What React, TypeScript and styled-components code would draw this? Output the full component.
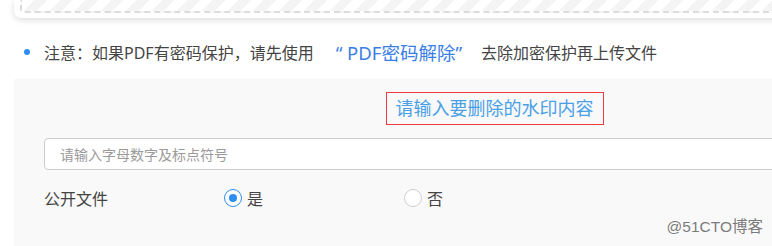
import React, { useState } from "react";
import styled, { createGlobalStyle } from "styled-components";

const Global = createGlobalStyle`
  html, body { margin: 0; padding: 0; background: #fff; overflow: hidden; }
  body { font-family: "Noto Sans", "Noto Sans CJK SC", sans-serif; }
`;

const Viewport = styled.div`
  position: relative;
  width: 772px;
  height: 246px;
  overflow: hidden;
  background: #fff;
`;

const Page = styled.div`
  width: 961px;
  padding-left: 14px;
  display: flex;
  flex-direction: column;
`;

const UploadCard = styled.div`
  height: 18px;
  box-sizing: border-box;
  padding: 0 6px 5px 6px;
  background: #fff;
  border-radius: 0 0 7px 7px;
  box-shadow: 0 2px 6px rgba(0, 0, 0, 0.14);
  display: flex;
`;

const DropZone = styled.div`
  flex: 1;
  border: 2px dashed #dcdcdc;
  border-top: none;
  border-radius: 0 0 3px 3px;
  background: repeating-linear-gradient(
    135deg,
    #ffffff 0 9px,
    #f4f4f4 9px 18px
  );
`;

const Notice = styled.div`
  margin-top: 22px;
  height: 24px;
  display: flex;
  align-items: center;
  padding-left: 10px;
  font-size: 16px;
  color: #444;
  white-space: nowrap;
`;

const Bullet = styled.span`
  width: 6px;
  height: 6px;
  border-radius: 50%;
  background: #2e8df0;
  margin-right: 14px;
  flex: none;
`;

const Link = styled.span`
  color: #3a7ee6;
  font-size: 18.5px;
  margin: 0 19px 0 22px;
`;

const Panel = styled.div`
  margin-top: 15px;
  background: #f9f9f9;
  padding: 13px 30px 40px 30px;
  display: flex;
  flex-direction: column;
`;

const TitleRow = styled.div`
  display: flex;
  justify-content: center;
`;

const TitleBox = styled.div`
  border: 1px solid #ee3b3b;
  padding: 0 9px;
  height: 31px;
  line-height: 31px;
  font-size: 18px;
  color: #4aa0e6;
`;

const TextInput = styled.input`
  margin-top: 13px;
  height: 32px;
  box-sizing: border-box;
  border: 1px solid #cccccc;
  border-radius: 4px;
  background: #fff;
  padding: 0 15px;
  font-family: "Noto Sans", "Noto Sans CJK SC", sans-serif;
  font-size: 14px;
  color: #333;
  outline: none;
  &::placeholder { color: #9a9a9a; }
`;

const OptionRow = styled.div`
  margin-top: 12px;
  height: 32px;
  display: grid;
  grid-template-columns: 180px 180px 180px;
  align-items: center;
  font-size: 16px;
  color: #444;
`;

const Label = styled.span``;

const RadioOption = styled.label`
  display: flex;
  align-items: center;
  gap: 5px;
  cursor: pointer;
`;

const RadioCircle = styled.span<{ $checked: boolean }>`
  width: 16px;
  height: 16px;
  border-radius: 50%;
  border: 1px solid ${(p) => (p.$checked ? "#2e8df0" : "#cfcfcf")};
  background: #fff;
  display: flex;
  align-items: center;
  justify-content: center;
  &::after {
    content: "";
    width: 8px;
    height: 8px;
    border-radius: 50%;
    background: ${(p) => (p.$checked ? "#2e8df0" : "transparent")};
  }
`;

const Watermark = styled.div`
  position: absolute;
  right: 9px;
  bottom: 10px;
  font-family: "Liberation Sans", "Noto Sans CJK SC", sans-serif;
  font-size: 15.5px;
  color: #7a7a7a;
  text-shadow: 0 0 2px #fff, 0 0 1px #fff;
  white-space: nowrap;
`;

export default function App() {
  const [open, setOpen] = useState(true);
  return (
    <>
      <Global />
      <Viewport>
        <Page>
          <UploadCard>
            <DropZone />
          </UploadCard>
          <Notice>
            <Bullet />
            注意：如果PDF有密码保护，请先使用
            <Link>“ PDF密码解除”</Link>
            去除加密保护再上传文件
          </Notice>
          <Panel>
            <TitleRow>
              <TitleBox>请输入要删除的水印内容</TitleBox>
            </TitleRow>
            <TextInput placeholder="请输入字母数字及标点符号" />
            <OptionRow>
              <Label>公开文件</Label>
              <RadioOption onClick={() => setOpen(true)}>
                <RadioCircle $checked={open} />
                是
              </RadioOption>
              <RadioOption onClick={() => setOpen(false)}>
                <RadioCircle $checked={!open} />
                否
              </RadioOption>
            </OptionRow>
          </Panel>
        </Page>
        <Watermark>@51CTO博客</Watermark>
      </Viewport>
    </>
  );
}
